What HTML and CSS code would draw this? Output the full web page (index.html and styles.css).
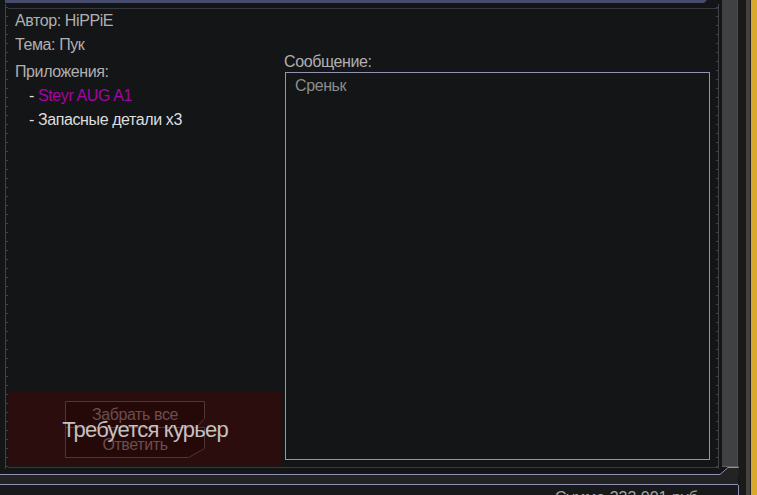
FILE: index.html
```html
<!DOCTYPE html>
<html lang="ru">
<head>
  <meta charset="UTF-8">
  <title>Почта</title>
  <link rel="stylesheet" href="styles.css">
</head>
<body>
  <div class="screen">
    <div class="pane">
      <div class="main">
        <div class="window">
          <div class="tab"></div>
          <div class="frame">
            <div class="content">
              <div class="letter">
                <div class="info">
                  <div class="line">Автор: HiPPiE</div>
                  <div class="line">Тема: Пук</div>
                  <div class="line attach-title">Приложения:</div>
                  <div class="line item">- <span class="weapon">Steyr AUG A1</span></div>
                  <div class="line item white">- Запасные детали x3</div>
                </div>
                <div class="courier">
                  <div class="btn">
                    <svg class="btn-frame" viewBox="0 0 140 27" preserveAspectRatio="none">
                      <polygon points="0.5,0.5 139.5,0.5 139.5,17.5 131.5,26.5 0.5,26.5"/>
                    </svg>
                    <span>Забрать все</span>
                  </div>
                  <div class="btn second">
                    <svg class="btn-frame" viewBox="0 0 140 31" preserveAspectRatio="none">
                      <polygon points="0.5,0.5 139.5,0.5 139.5,21.5 123.5,30.5 0.5,30.5"/>
                    </svg>
                    <span>Ответить</span>
                  </div>
                  <div class="courier-note">Требуется курьер</div>
                </div>
              </div>
              <div class="message">
                <div class="label">Сообщение:</div>
                <div class="message-box">Срен&#1100;к</div>
              </div>
            </div>
          </div>
        </div>
        <div class="scroll-col">
          <div class="track"></div>
          <svg class="corner" width="19" height="8" viewBox="0 0 19 8">
            <polygon points="0,8 0,7.5 8,0.5 19,0.5 19,8" fill="#232323"/>
            <polyline points="0,7.5 8,0.5 18.5,0.5 18.5,0" fill="none" stroke="#8f91b3" stroke-width="1"/>
          </svg>
        </div>
      </div>
      <div class="strip"></div>
      <div class="footer">Сумма 333 001 руб</div>
    </div>
    <div class="rails"></div>
  </div>
</body>
</html>
```

FILE: styles.css
```css
body {
  margin: 0;
  background-color: #141517;
  font-family: 'Liberation Sans', Arial, sans-serif;
  font-size: 16px;
  letter-spacing: -0.4px;
  color: #b0b0b0;
  overflow: hidden;
}

.screen {
  display: flex;
  width: 757px;
  height: 495px;
  overflow: hidden;
}

.pane {
  width: 739px;
  display: flex;
  flex-direction: column;
}

.main {
  display: flex;
  height: 475px;
  flex-shrink: 0;
}

.window {
  width: 720px;
  height: 474px;
  border-bottom: 1px solid #8f91b3;
  display: flex;
  flex-direction: column;
}

.tab {
  height: 3px;
  margin-left: 5px;
  width: 702px;
  background-color: #484c6c;
  clip-path: polygon(0 0, 100% 0, calc(100% - 3px) 100%, 0 100%);
}

.frame {
  margin-top: 1px;
  height: 465px;
  padding: 4px 1px 1px 8px;
  box-sizing: border-box;
  background:
    linear-gradient(#414347, #414347) 5px 0 / 1px 100% no-repeat,
    repeating-linear-gradient(to bottom, #414347 0 1px, transparent 1px 9px) 6px 3px / 2px 100% no-repeat,
    linear-gradient(#414347, #414347) 718px 0 / 1px 100% no-repeat,
    repeating-linear-gradient(to bottom, #414347 0 1px, transparent 1px 9px) 716px 3px / 2px 100% no-repeat;
}

.content {
  display: flex;
  height: 460px;
  box-sizing: border-box;
  border-top: 1px solid #38393c;
  border-bottom: 1px solid #38393c;
}

/* left column */
.letter {
  width: 274px;
  display: flex;
  flex-direction: column;
  justify-content: space-between;
}

.info {
  padding-left: 7px;
}

.line {
  line-height: 24px;
  white-space: nowrap;
}

.attach-title {
  margin-top: 3px;
}

.item {
  padding-left: 14px;
  color: #dedede;
}

.weapon {
  color: #a306a6;
}

.courier {
  position: relative;
  height: 74px;
  margin-bottom: 1px;
  background-color: #2b0d0d;
  padding: 9px 0 0 57px;
  box-sizing: border-box;
}

.btn {
  position: relative;
  width: 140px;
  height: 27px;
  line-height: 27px;
  text-align: center;
  color: #6b4e4e;
}

.btn.second {
  height: 31px;
  line-height: 31px;
  margin-top: -1px;
}

.btn.second span {
  position: relative;
  top: 2px;
}

.btn span {
  position: relative;
}

.btn-frame {
  position: absolute;
  left: 0;
  top: 0;
  width: 100%;
  height: 100%;
}

.btn-frame polygon {
  fill: #250909;
  stroke: #4f3535;
  stroke-width: 1;
}

.courier-note {
  position: absolute;
  left: 0;
  right: 0;
  top: 25px;
  text-align: center;
  font-size: 22px;
  line-height: 26px;
  letter-spacing: -0.8px;
  color: #c6c0c0;
}

/* right column */
.message {
  flex: 1;
  padding-top: 43px;
}

.label {
  line-height: 19px;
  padding-left: 2px;
}

.message-box {
  margin: 1px 0 0 3px;
  width: 425px;
  height: 388px;
  box-sizing: border-box;
  border: 1px solid #9294b2;
  padding: 3px 9px;
  line-height: 20px;
  color: #8c8c8c;
}

/* scrollbar and side */
.scroll-col {
  width: 19px;
  display: flex;
  flex-direction: column;
}

.track {
  height: 467px;
  flex-shrink: 0;
  margin-left: 2px;
  width: 17px;
  box-sizing: border-box;
  background-color: #404142;
  border-right: 1px solid #1d1d1e;
  border-bottom: 1px solid #5c5c5e;
  box-shadow: inset -1px 0 0 #4c4c4d, 1px 0 0 #8f91b3;
}

.corner {
  display: block;
  flex-shrink: 0;
}

.strip {
  height: 10px;
  flex-shrink: 0;
  background-color: #232323;
  border-bottom: 1px solid #8f91b3;
  margin-right: 1px;
  box-sizing: border-box;
}

.footer {
  flex: 1;
  min-height: 0;
  overflow: hidden;
  border-right: 1px solid #8f91b3;
  background-color: #18191b;
  padding: 4px 40px 0 0;
  text-align: right;
  line-height: 18px;
  letter-spacing: 0;
  white-space: nowrap;
  color: #a6a6a6;
}

.rails {
  width: 18px;
  background: linear-gradient(to right, #1a1a1b 0 7px, #46423a 7px 11px, #262628 11px 12px, #d9a92c 12px);
}
```
